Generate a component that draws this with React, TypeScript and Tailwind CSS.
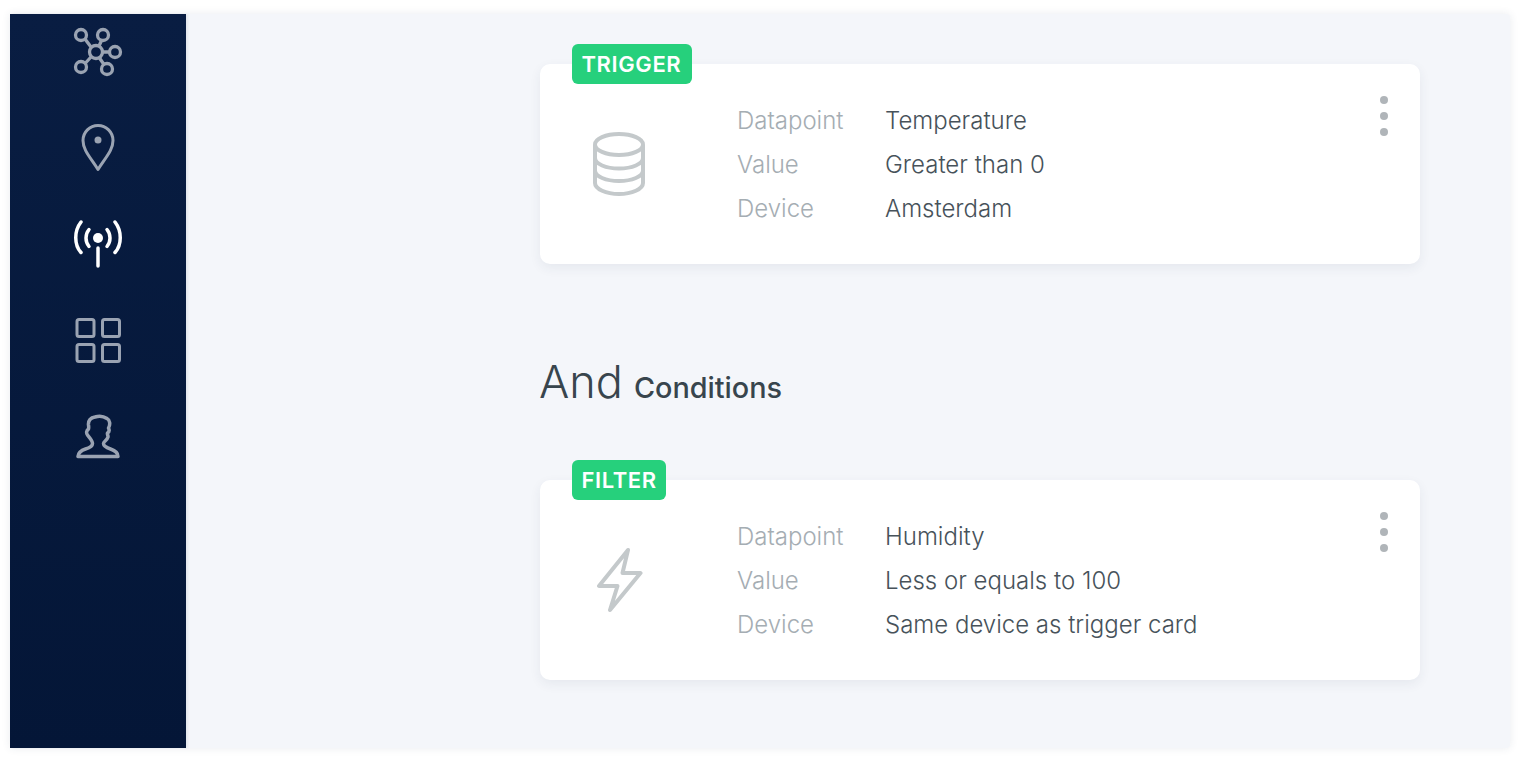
import React from "react";

const NetworkIcon = () => (
  <svg width="50" height="50" viewBox="1 0 50 50" fill="none" stroke="currentColor" strokeWidth="3.300">
    <circle cx="24" cy="25" r="6.500" />
    <circle cx="9" cy="8" r="5.500" />
    <circle cx="31" cy="8" r="5.500" />
    <circle cx="43" cy="25" r="5.500" />
    <circle cx="9" cy="40" r="5.500" />
    <circle cx="35" cy="42" r="5.500" />
    <path d="M13 12l6 8M29.500 13.500l-2.500 5.500M31 25h6.500M13.500 36l5.500-6M27.500 31l4.500 6.500" />
  </svg>
);

const PinIcon = () => (
  <svg width="34" height="50" viewBox="0 0 34 50" fill="none" stroke="currentColor" strokeWidth="3">
    <path d="M17 45.500C9 33 2 26 2 16.500a15 15 0 0 1 30 0c0 9.500-7 16.500-15 29z" strokeLinejoin="round" />
    <circle cx="17" cy="16" r="3.500" fill="currentColor" stroke="none" />
  </svg>
);

const AntennaIcon = () => (
  <svg width="50" height="50" viewBox="0 0 50 50" fill="none" stroke="currentColor" strokeWidth="3.500" strokeLinecap="round">
    <circle cx="25" cy="18" r="5" fill="currentColor" stroke="none" />
    <path d="M25 28v18" />
    <path d="M16 9.500c-4 5-4 12 0 17M34 9.500c4 5 4 12 0 17" />
    <path d="M8 2c-7 9-7 22.500 0 30.500M42 2c7 9 7 22.500 0 30.500" />
  </svg>
);

const GridIcon = () => (
  <svg width="46" height="46" viewBox="0 0 46 46" fill="none" stroke="currentColor" strokeWidth="3">
    <rect x="2" y="1.500" width="17" height="17" rx="2" />
    <rect x="27.500" y="1.500" width="17" height="17" rx="2" />
    <rect x="2" y="26.500" width="17" height="17" rx="2" />
    <rect x="27.500" y="26.500" width="17" height="17" rx="2" />
  </svg>
);

const UserIcon = () => (
  <svg width="46" height="46" viewBox="0 0 46 46" fill="none" stroke="currentColor" strokeWidth="3.500" strokeLinejoin="round">
    <path d="M3 42.500H43C43 39 40 36.500 35.500 35C31.500 33.600 28.500 32 28.500 29.500C28.500 27.500 32 26.500 33 23C33.300 21.500 32 20.500 32.500 19C34 18 34.500 16 33.500 14C35.500 10.500 35 6 32 4.500C28 1.800 23.500 1.800 20 3C15.500 3.500 13 7 13.500 11C13.800 13 13.800 14 13.500 15C11.500 16.500 11 19 12.500 21C13.800 23 17.500 26.500 17.500 29.500C17.500 32 14.500 33.800 10.500 35C6 36.500 3.300 39 3 42.500Z" />
  </svg>
);

const DatabaseIcon = () => (
  <svg width="52" height="64" viewBox="0 0 52 64" fill="none" stroke="#c4c9cb" strokeWidth="4">
    <ellipse cx="26" cy="12.500" rx="24" ry="10.500" />
    <path d="M2 13v38c0 6 11 11 24 11s24-5 24-11V13" />
    <path d="M2 26c0 6 11 10.500 24 10.500S50 32 50 26" />
    <path d="M2 38.500C2 44.500 13 49 26 49s24-4.500 24-10.500" />
  </svg>
);

const BoltIcon = () => (
  <svg width="48" height="66" viewBox="0 0 48 66" fill="none" stroke="#c4c9cb" strokeWidth="4" strokeLinejoin="round">
    <path d="M33 3L4 39H22.500L15 63L45.500 26H27.500Z" />
  </svg>
);

type Row = { label: string; value: string };

const FlowCard = ({
  badge,
  badgeWidth,
  icon,
  rows,
}: {
  badge: string;
  badgeWidth: string;
  icon: React.ReactNode;
  rows: Row[];
}) => (
  <div className="relative flex h-[200px] w-[880px] rounded-[10px] bg-white shadow-[0_4px_12px_rgba(40,60,90,0.07)]">
    <span className={`absolute left-[32px] top-[-20px] flex h-[40px] items-center rounded-[6px] bg-[#26d07c] pl-[9.500px] text-[22px] font-semibold tracking-[0.6px] text-white ${badgeWidth}`}>
      {badge}
    </span>
    <div className="flex w-[157px] shrink-0 items-center justify-center">
      {icon}
    </div>
    <div className="mt-[35px] ml-[40px] grid h-fit grid-cols-[148px_auto] auto-rows-[44px] items-center text-[24px] font-light">
      {rows.map((row) => (
        <React.Fragment key={row.label}>
          <span className="text-[#a5adb3]">{row.label}</span>
          <span className="text-[#47525a]">{row.value}</span>
        </React.Fragment>
      ))}
    </div>
    <div className="ml-auto mr-[32px] mt-[32px] flex flex-col gap-[8px]">
      <span className="size-[8px] rounded-full bg-[#b0b5b9]" />
      <span className="size-[8px] rounded-full bg-[#b0b5b9]" />
      <span className="size-[8px] rounded-full bg-[#b0b5b9]" />
    </div>
  </div>
);

export default function App() {
  return (
    <div className="h-[760px] w-[1520px] overflow-hidden bg-white px-[10px] pt-[14px] font-['Inter',sans-serif]">
      <div className="flex h-[734px] w-[1500px] rounded-r-[4px] bg-[#f4f6fa] shadow-[0_0_8px_rgba(40,60,90,0.10)]">
        <nav className="flex w-[176px] shrink-0 flex-col items-center bg-gradient-to-b from-[#091d42] to-[#041637] pr-[1px] text-[#9aa3b2] shadow-[2px_0_2px_rgba(40,60,90,0.08)]">
          <div className="mt-[13px] flex h-[50px] items-center justify-center"><NetworkIcon /></div>
          <div className="mt-[47px] flex h-[50px] items-center justify-center"><PinIcon /></div>
          <div className="mt-[46px] flex h-[50px] items-center justify-center text-white"><AntennaIcon /></div>
          <div className="mt-[48px] flex h-[46px] items-center justify-center"><GridIcon /></div>
          <div className="mt-[50px] flex h-[46px] items-center justify-center"><UserIcon /></div>
        </nav>
        <main className="pl-[354px] pt-[50px]">
          <FlowCard
            badge="TRIGGER"
            badgeWidth="w-[120px]"
            icon={<DatabaseIcon />}
            rows={[
              { label: "Datapoint", value: "Temperature" },
              { label: "Value", value: "Greater than 0" },
              { label: "Device", value: "Amsterdam" },
            ]}
          />
          <h2 className="mb-[68px] mt-[84px] flex h-[64px] items-baseline gap-[11px] font-light text-[#38454d]">
            <span className="-ml-[1px] text-[45px]">And</span>
            <span className="text-[28.800px] font-medium">Conditions</span>
          </h2>
          <FlowCard
            badge="FILTER"
            badgeWidth="w-[94px]"
            icon={<BoltIcon />}
            rows={[
              { label: "Datapoint", value: "Humidity" },
              { label: "Value", value: "Less or equals to 100" },
              { label: "Device", value: "Same device as trigger card" },
            ]}
          />
        </main>
      </div>
    </div>
  );
}
